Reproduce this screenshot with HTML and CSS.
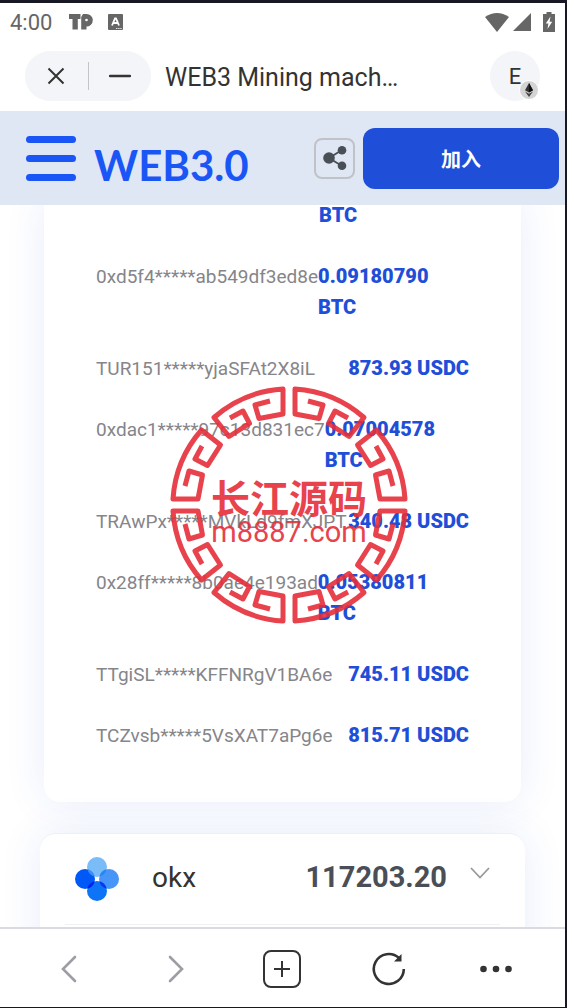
FILE: index.html
```
<!DOCTYPE html>
<html lang="zh-CN">
<head>
    <meta charset="UTF-8">
    <meta name="viewport" content="width=device-width, initial-scale=1.0">
    <title>WEB3 Mining machine</title>
    <link rel="stylesheet" href="styles.css">
</head>
<body>
    <!-- 系统状态栏 -->
    <div class="status-bar">
        <span class="clock">4:00</span>
        <svg class="icon-tp" width="24" height="16" viewBox="0 0 24 16">
            <path d="M0 0H11.500V5H8.800V15.500H3.500V5H0Z" fill="#666"/>
            <path d="M12.200 15.500V3L14 0H17.500A6.300 6.300 0 0 1 17.500 12.600V15.500Z" fill="#666"/>
            <circle cx="17.500" cy="6" r="1.300" fill="#fff"/>
        </svg>
        <svg width="15" height="16" viewBox="0 0 15 16">
            <rect width="15" height="16" rx="1" fill="#666"/>
            <path d="M4 11.500L7 4.500H8L11 11.500M5.200 9H9.800" fill="none" stroke="#fff" stroke-width="1.800"/>
            <path d="M8 14.500H14" stroke="#ddd" stroke-dasharray="1.500 .6"/>
        </svg>
        <div class="status-icons">
            <svg width="24" height="19" viewBox="0 0 24 19"><path d="M0 4Q12-4 24 4L12 19Z" fill="#666"/></svg>
            <svg width="18" height="18" viewBox="0 0 18 18"><path d="M18 0V18H0Z" fill="#666"/></svg>
            <svg class="icon-battery" width="12" height="20" viewBox="0 0 12 20">
                <path d="M3.500 0H8.500V2H12V20H0V2H3.500Z" fill="#666"/>
                <path d="M7.500 4.500L2.800 11.500H5.400L4.500 17L9.200 9.800H6.600Z" fill="#fff"/>
            </svg>
        </div>
    </div>

    <!-- 钱包浏览器标题栏 -->
    <div class="app-bar">
        <div class="capsule">
            <button type="button" aria-label="关闭">
                <svg width="18" height="18" viewBox="0 0 18 18"><path d="M1.500 1.500L16.500 16.500M16.500 1.500L1.500 16.500" stroke="#333" stroke-width="2"/></svg>
            </button>
            <span class="divider"></span>
            <button type="button" aria-label="最小化">
                <svg width="22" height="4" viewBox="0 0 22 4"><path d="M1 2H21" stroke="#333" stroke-width="2.400" stroke-linecap="round"/></svg>
            </button>
        </div>
        <div class="app-title">WEB3 Mining mach…</div>
        <button type="button" class="account">E
            <svg class="chain" width="20" height="20" viewBox="0 0 20 20">
                <circle cx="10" cy="10" r="9.500" fill="#d4d4d4" stroke="#fff"/>
                <path d="M10 3L6 10.200L10 12.600L14 10.200Z" fill="#333"/>
                <path d="M10 3V12.600L14 10.200Z" fill="#111"/>
                <path d="M6 11.400L10 17L14 11.400L10 13.800Z" fill="#444"/>
            </svg>
        </button>
    </div>

    <header class="header">
        <button type="button" class="menu" aria-label="菜单">
            <span></span>
            <span></span>
            <span></span>
        </button>
        <div class="brand">WEB3.0</div>
        <button type="button" class="share" aria-label="分享">
            <svg width="24" height="24" viewBox="0 0 24 24">
                <path d="M6 12L19 4M6 12L19 20" stroke="#4a4f57" stroke-width="2"/>
                <circle cx="6" cy="12" r="5.800" fill="#4a4f57"/>
                <circle cx="19" cy="4.300" r="4.300" fill="#4a4f57"/>
                <circle cx="19" cy="19.700" r="4.300" fill="#4a4f57"/>
            </svg>
        </button>
        <button type="button" class="join">加入</button>
    </header>

    <main class="content">
        <section class="card output-list">
            <div class="row row-tail"><b>BTC</b></div>
            <div class="row"><span>0xd5f4*****ab549df3ed8e</span><b>0.09180790 BTC</b></div>
            <div class="row"><span>TUR151*****yjaSFAt2X8iL</span><b>873.93 USDC</b></div>
            <div class="row"><span>0xdac1*****97c13d831ec7</span><b>0.07004578 BTC</b></div>
            <div class="row"><span>TRAwPx*****MVkLd9fmXJPT</span><b>340.48 USDC</b></div>
            <div class="row"><span>0x28ff*****8b0ae4e193ad</span><b>0.05380811 BTC</b></div>
            <div class="row"><span>TTgiSL*****KFFNRgV1BA6e</span><b>745.11 USDC</b></div>
            <div class="row"><span>TCZvsb*****5VsXAT7aPg6e</span><b>815.71 USDC</b></div>
        </section>

        <section class="card market">
            <div class="market-row">
                <svg width="44" height="44" viewBox="0 0 44 44">
                    <circle cx="22" cy="10" r="10" fill="#7abcf8"/>
                    <circle cx="34" cy="22" r="10" fill="#4795f8"/>
                    <circle cx="22" cy="34" r="10" fill="#0d74f7"/>
                    <circle cx="10" cy="22" r="10" fill="#0059f7"/>
                    <path d="M12.500 12.300A10 10 0 0 1 19.500 19.600A10 10 0 0 1 12.500 12.300Z" fill="#3c8ff5"/>
                    <path d="M31.500 12.300A10 10 0 0 0 24.500 19.600A10 10 0 0 0 31.500 12.300Z" fill="#2787ee"/>
                    <path d="M12.300 31.700A10 10 0 0 0 19.700 24.300A10 10 0 0 0 12.300 31.700Z" fill="#0022f5"/>
                    <path d="M31.700 31.700A10 10 0 0 1 24.300 24.300A10 10 0 0 1 31.700 31.700Z" fill="#0838f0"/>
                    <rect x="20" y="20" width="4" height="4" fill="#fff"/>
                </svg>
                <span class="market-name">okx</span>
                <strong class="market-price">117203.20</strong>
                <svg class="chevron" width="20" height="24" viewBox="0 0 20 24"><path d="M1 1L10 10.500L19 1" fill="none" stroke="#999" stroke-width="1.800"/></svg>
            </div>
        </section>
    </main>

    <nav class="toolbar">
        <button type="button" aria-label="后退">
            <svg width="16" height="28" viewBox="0 0 16 28"><path d="M14 2L2 14L14 26" fill="none" stroke="#9d9da5" stroke-width="2.600" stroke-linecap="round"/></svg>
        </button>
        <button type="button" aria-label="前进">
            <svg width="16" height="28" viewBox="0 0 16 28"><path d="M2 2L14 14L2 26" fill="none" stroke="#9d9da5" stroke-width="2.600" stroke-linecap="round"/></svg>
        </button>
        <button type="button" aria-label="新标签页">
            <svg width="38" height="38" viewBox="0 0 38 38">
                <rect x="1" y="1" width="36" height="36" rx="7" fill="none" stroke="#333" stroke-width="2"/>
                <path d="M11 19H27M19 11V27" stroke="#333" stroke-width="2"/>
            </svg>
        </button>
        <button type="button" aria-label="刷新">
            <svg width="34" height="34" viewBox="0 0 34 34">
                <path d="M31.800 17A15 15 0 1 1 27 6" fill="none" stroke="#333" stroke-width="2.600"/>
                <path d="M29.500 2V9.500H22Z" fill="#333"/>
            </svg>
        </button>
        <button type="button" aria-label="更多">
            <svg width="32" height="8" viewBox="0 0 32 8">
                <circle cx="3.500" cy="4" r="3.300" fill="#333"/>
                <circle cx="16" cy="4" r="3.300" fill="#333"/>
                <circle cx="28.500" cy="4" r="3.300" fill="#333"/>
            </svg>
        </button>
    </nav>

    <!-- 水印 -->
    <svg class="watermark" width="240" height="240" viewBox="-120 -120 240 240">
        <defs>
            <path id="fret" d="M-59-87L-46-94L-39.500-81.500L-60-68.500L-75-87.500A116 116 0 0 1-6-116L-6-91L-30-86.500L-34-100L-19-104"/>
            <g id="corner">
                <use href="#fret"/>
                <use href="#fret" transform="matrix(0 1 1 0 0 0)"/>
            </g>
        </defs>
        <g class="fret-ring">
            <use href="#corner"/>
            <use href="#corner" transform="scale(-1 1)"/>
            <use href="#corner" transform="scale(1 -1)"/>
            <use href="#corner" transform="scale(-1 -1)"/>
        </g>
        <text class="mark-name" x="0" y="8">长江源码</text>
        <text class="mark-url" x="0" y="37">m8887.com</text>
    </svg>
</body>
</html>
```
FILE: styles.css
```
:root {
    --blue: #1f4fd8;
    --bright-blue: #1a56f5;
    --text-dark: #333333;
    --text-gray: #85858a;
    --frame: #181824;
}

* {
    box-sizing: border-box;
}

body {
    position: relative;
    height: 100vh;
    margin: 0;
    border: solid var(--frame);
    border-width: 3px 2px 1px 0;
    display: flex;
    flex-direction: column;
    overflow: hidden;
    background: #ffffff;
    color: var(--text-dark);
    font-family: Roboto, "Noto Sans CJK SC", sans-serif;
}

button {
    padding: 0;
    border: 0;
    background: none;
    color: inherit;
    font-family: inherit;
    cursor: pointer;
}

svg {
    display: block;
    flex: none;
}

/* 状态栏 */
.status-bar {
    flex: none;
    height: 38px;
    padding: 0 10px;
    display: flex;
    align-items: center;
}

.clock {
    margin-right: 17px;
    font-size: 22px;
    color: #666666;
}

.icon-tp {
    margin-right: 15px;
}

.status-icons {
    margin-left: auto;
    display: flex;
    align-items: center;
    gap: 4px;
}

.icon-battery {
    margin-left: 8px;
}

/* 标题栏 */
.app-bar {
    flex: none;
    height: 70px;
    padding: 0 25px;
    display: flex;
    align-items: center;
}

.capsule {
    width: 126px;
    height: 50px;
    border-radius: 25px;
    background: #f4f5f8;
    display: flex;
    align-items: center;
}

.capsule button {
    flex: 1;
    height: 100%;
    display: flex;
    align-items: center;
    justify-content: center;
}

.divider {
    width: 1px;
    height: 28px;
    background: #c4c5c8;
}

.app-title {
    margin-left: 14px;
    padding-top: 2px;
    font-size: 25px;
}

.account {
    position: relative;
    width: 50px;
    height: 50px;
    margin-left: auto;
    border-radius: 50%;
    background: #f4f5f8;
    font-size: 22px;
}

.chain {
    position: absolute;
    right: 1px;
    bottom: 1px;
}

/* 页头 */
.header {
    flex: none;
    height: 94px;
    padding: 0 6px 0 26px;
    display: flex;
    align-items: center;
    background: #dfe7f5;
}

.menu {
    width: 50px;
    display: flex;
    flex-direction: column;
    gap: 12px;
}

.menu span {
    height: 7px;
    border-radius: 4px;
    background: var(--bright-blue);
}

.brand {
    margin-left: 18px;
    padding-top: 14px;
    font-family: Lato, sans-serif;
    font-size: 42px;
    line-height: 48px;
    font-weight: 700;
    color: var(--bright-blue);
}

.share {
    width: 41px;
    height: 41px;
    margin-left: auto;
    border: 2px solid #c0c2c5;
    border-radius: 8px;
    display: flex;
    align-items: center;
    justify-content: center;
}

.join {
    width: 196px;
    height: 61px;
    margin-left: 8px;
    border-radius: 12px;
    background: var(--blue);
    color: #ffffff;
    font-size: 20px;
    font-weight: 700;
}

/* 产出列表 */
.content {
    flex: 1;
    min-height: 0;
    overflow: hidden;
}

.card {
    background: #ffffff;
    box-shadow: 0 0 40px rgba(31, 79, 216, 0.1);
}

.output-list {
    margin: -5px 44px 0;
    padding: 0 52px 51px;
    border-radius: 0 0 16px 16px;
    display: flex;
    flex-direction: column;
    gap: 30px;
}

.row {
    display: flex;
    justify-content: space-between;
    font-size: 20px;
    line-height: 31px;
}

.row-tail {
    padding-left: 223px;
}

.row span {
    font-size: 19px;
    color: var(--text-gray);
}

.row b {
    color: var(--blue);
    font-weight: 900;
}

/* 行情 */
.market {
    margin: 31px 40px 0;
    padding: 0 25px 80px;
    border-top: 1px solid #edf0f6;
    border-radius: 16px 16px 0 0;
}

.market-row {
    height: 91px;
    padding: 0 10px;
    border-bottom: 1px solid #eff1f5;
    display: flex;
    align-items: center;
}

.market-name,
.market-price {
    padding-bottom: 4px;
}

.market-name {
    margin-left: 33px;
    font-size: 28px;
}

.market-price {
    margin-left: auto;
    font-size: 29px;
    color: #4a4f57;
}

.chevron {
    margin-left: 23px;
}

/* 底部工具栏 */
.toolbar {
    flex: none;
    height: 80px;
    padding: 2px 16px 0;
    border-top: 2px solid #d9dbde;
    display: grid;
    grid-template-columns: repeat(5, 1fr);
    background: #ffffff;
}

.toolbar button {
    display: flex;
    align-items: center;
    justify-content: center;
}

.watermark {
    position: absolute;
    top: 382px;
    left: 169px;
    opacity: 0.9;
    pointer-events: none;
}

.fret-ring {
    fill: none;
    stroke: #e62e3a;
    stroke-width: 5;
    stroke-linejoin: round;
}

.watermark text {
    fill: #e62e3a;
    text-anchor: middle;
}

.mark-name {
    font-family: "Noto Sans CJK SC", sans-serif;
    font-size: 39px;
    font-weight: 700;
}

.mark-url {
    font-family: Roboto, sans-serif;
    font-size: 29px;
}
```
